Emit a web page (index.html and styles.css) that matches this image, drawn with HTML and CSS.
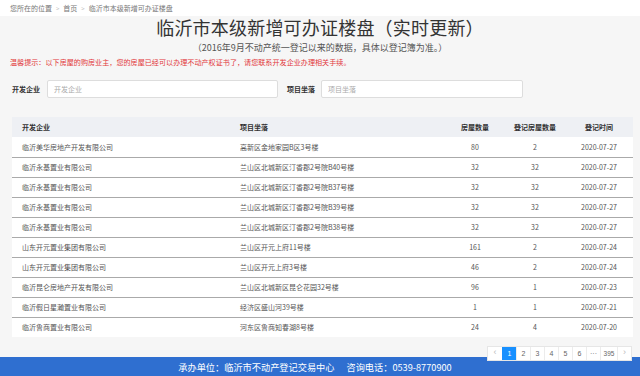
FILE: index.html
```html
<!DOCTYPE html>
<html lang="zh-CN">
<head>
<meta charset="utf-8">
<title>临沂市本级新增可办证楼盘</title>
<link rel="stylesheet" href="styles.css">
</head>
<body>
<div class="crumb">
  <span>您所在的位置</span><span class="sep">&gt;</span><span>首页</span><span class="sep">&gt;</span><span>临沂市本级新增可办证楼盘</span>
</div>
<main class="page">
  <h1 class="title">临沂市本级新增可办证楼盘（实时更新）</h1>
  <p class="subtitle">（2016年9月不动产统一登记以来的数据，具体以登记簿为准。）</p>
  <p class="notice">温馨提示：以下房屋的购房业主，您的房屋已经可以办理不动产权证书了，请您联系开发企业办理相关手续。</p>
  <div class="search">
    <label class="lbl">开发企业</label>
    <input class="inp inp1" placeholder="开发企业">
    <label class="lbl lbl2">项目坐落</label>
    <input class="inp inp2" placeholder="项目坐落">
  </div>
  <table class="grid">
    <colgroup>
      <col class="c1"><col class="c2"><col class="c3"><col class="c4"><col class="c5">
    </colgroup>
    <thead>
      <tr><th class="l">开发企业</th><th class="l">项目坐落</th><th>房屋数量</th><th>登记房屋数量</th><th>登记时间</th></tr>
    </thead>
    <tbody>
      <tr><td class="l">临沂美华房地产开发有限公司</td><td class="l">高新区金地家园B区3号楼</td><td>80</td><td>2</td><td>2020-07-27</td></tr>
      <tr><td class="l">临沂永基置业有限公司</td><td class="l">兰山区北城新区汀香郡2号院B40号楼</td><td>32</td><td>32</td><td>2020-07-27</td></tr>
      <tr><td class="l">临沂永基置业有限公司</td><td class="l">兰山区北城新区汀香郡2号院B37号楼</td><td>32</td><td>32</td><td>2020-07-27</td></tr>
      <tr><td class="l">临沂永基置业有限公司</td><td class="l">兰山区北城新区汀香郡2号院B39号楼</td><td>32</td><td>32</td><td>2020-07-27</td></tr>
      <tr><td class="l">临沂永基置业有限公司</td><td class="l">兰山区北城新区汀香郡2号院B38号楼</td><td>32</td><td>32</td><td>2020-07-27</td></tr>
      <tr><td class="l">山东开元置业集团有限公司</td><td class="l">兰山区开元上府11号楼</td><td>161</td><td>2</td><td>2020-07-24</td></tr>
      <tr><td class="l">山东开元置业集团有限公司</td><td class="l">兰山区开元上府3号楼</td><td>46</td><td>2</td><td>2020-07-24</td></tr>
      <tr><td class="l">临沂昆仑房地产开发有限公司</td><td class="l">兰山区北城新区昆仑花园32号楼</td><td>96</td><td>1</td><td>2020-07-23</td></tr>
      <tr><td class="l">临沂假日星瀚置业有限公司</td><td class="l">经济区盛山河39号楼</td><td>1</td><td>1</td><td>2020-07-21</td></tr>
      <tr><td class="l">临沂鲁商置业有限公司</td><td class="l">河东区鲁商知春湖8号楼</td><td>24</td><td>4</td><td>2020-07-20</td></tr>
    </tbody>
  </table>
  <div class="pager-row">
    <ul class="pager">
      <li class="pg dim">&lsaquo;</li>
      <li class="pg on">1</li>
      <li class="pg">2</li>
      <li class="pg">3</li>
      <li class="pg">4</li>
      <li class="pg">5</li>
      <li class="pg">6</li>
      <li class="pg">···</li>
      <li class="pg wide">395</li>
      <li class="pg dim">&rsaquo;</li>
    </ul>
  </div>
</main>
<footer class="foot">
  <span>承办单位：临沂市不动产登记交易中心</span>
  <span>咨询电话：0539-8770900</span>
</footer>
</body>
</html>
```
FILE: styles.css
```css
* { box-sizing: border-box; }
html, body { margin: 0; padding: 0; }
body {
  width: 640px;
  height: 376px;
  overflow: hidden;
  background: #f6f6f6;
  font-family: "Noto Sans CJK SC", "Noto Sans", sans-serif;
  color: #555;
}
.crumb {
  height: 16px;
  background: #fff;
  padding-left: 10px;
  display: flex;
  align-items: center;
  font-size: 7px;
  color: #777;
  gap: 4px;
}
.crumb .sep { color: #bbb; font-size: 6px; }
.page { display: flex; flex-direction: column; }
.title {
  margin: 0;
  padding-top: 1px;
  height: 21px;
  line-height: 20px;
  text-align: center;
  font-size: 18px;
  font-weight: 400;
  color: #333;
  letter-spacing: 0.2px;
}
.subtitle {
  margin: 0;
  margin-top: 5px;
  line-height: 12px;
  height: 12px;
  text-align: center;
  font-size: 9px;
  color: #555;
}
.notice {
  margin: 0;
  margin-top: 3px;
  padding-left: 10px;
  height: 10px;
  line-height: 10px;
  font-size: 7.1px;
  color: #e2363a;
}
.search {
  margin-top: 13px;
  height: 18px;
  display: flex;
  align-items: center;
  padding-left: 12px;
}
.lbl {
  font-size: 7px;
  font-weight: 700;
  color: #333;
  width: 35px;
}
.lbl2 { margin-left: 9px; width: 34px; }
.inp {
  height: 18px;
  border: 1px solid #ddd;
  border-radius: 2px;
  background: #fff;
  padding: 0 6px;
  font-family: inherit;
  font-size: 7px;
  color: #555;
  outline: none;
}
.inp::placeholder { color: #aaa; }
.inp1 { width: 231px; }
.inp2 { width: 202px; }
.grid {
  margin: 19px 7px 0 12px;
  width: 621px;
  border-collapse: collapse;
  table-layout: fixed;
  background: #fff;
  font-size: 7px;
}
.c1 { width: 218px; }
.c2 { width: 215px; }
.c3 { width: 60px; }
.c4 { width: 60px; }
.c5 { width: 68px; }
.grid th {
  height: 20px;
  background: #eef0f4;
  font-weight: 700;
  color: #333;
  text-align: center;
  padding: 0;
}
.grid td {
  height: 20px;
  padding: 0;
  text-align: center;
  color: #555;
  border-top: 1px solid #aaa;
  white-space: nowrap;
}
.grid tbody tr:first-child td { border-top: none; }
.grid .l { text-align: left; padding-left: 10px; }
.pager-row {
  margin-top: 9px;
  display: flex;
  justify-content: flex-end;
  padding-right: 8px;
  position: relative;
  z-index: 1;
}
.pager {
  list-style: none;
  margin: 0;
  padding: 0;
  display: flex;
  background: #fff;
  border: 1px solid #e6e6e6;
}
.pg {
  width: 14px;
  height: 13px;
  line-height: 13px;
  text-align: center;
  font-family: "Liberation Sans", sans-serif;
  font-size: 7px;
  color: #666;
  border-left: 1px solid #ececec;
  background: #fff;
  white-space: nowrap;
  overflow: hidden;
}
.pg:first-child { border-left: none; }
.pg.wide { width: 17px; font-size: 6.5px; }
.pg.dim { color: #bbb; font-size: 9px; line-height: 11px; }
.pg.on { background: #1890ff; border-color: #1890ff; color: #fff; }
.foot {
  margin-top: -4px;
  height: 20px;
  background: #2f6fd0;
  color: #fff;
  font-size: 9.2px;
  display: flex;
  justify-content: center;
  align-items: center;
  gap: 12px;
  padding-right: 10px;
}
```
